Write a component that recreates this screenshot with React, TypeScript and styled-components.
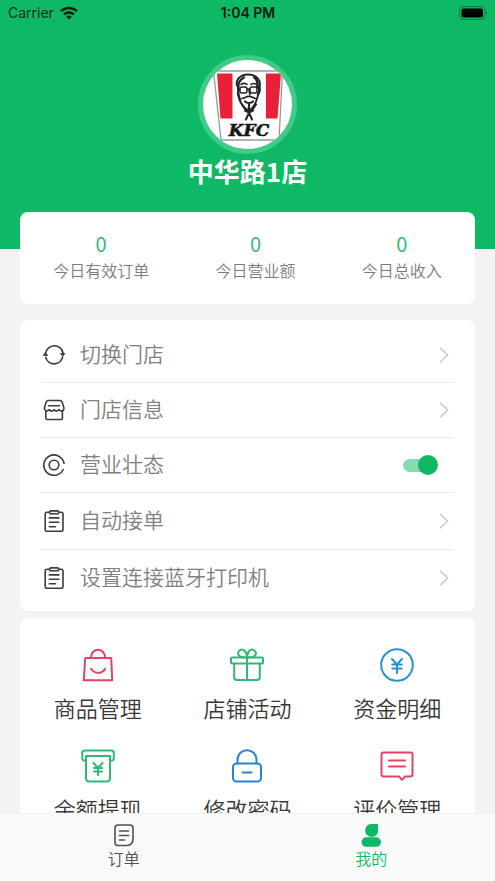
import React, { useState } from "react";
import styled, { createGlobalStyle } from "styled-components";

const green = "#0eb865";
const red = "#e04561";
const blue = "#2a8fd4";

const GlobalStyle = createGlobalStyle`
  * { box-sizing: border-box; }
  body {
    margin: 0;
    background: #f3f3f3;
    font-family: Roboto, "Noto Sans CJK SC", sans-serif;
  }
  button { font: inherit; color: inherit; background: none; border: 0; padding: 0; cursor: pointer; }
`;

const Screen = styled.div`
  display: flex;
  flex-direction: column;
  height: 100vh;
`;

const Content = styled.main`
  flex: 1;
  min-height: 0;
  overflow-y: auto;
  scrollbar-width: none;
`;

const Header = styled.header`
  display: flex;
  flex-direction: column;
  align-items: center;
  padding-bottom: 62px;
  background: ${green};
`;

const StatusBar = styled.div`
  display: grid;
  grid-template-columns: 1fr auto 1fr;
  align-items: center;
  align-self: stretch;
  height: 26px;
  padding: 0 7px 0 8px;
  color: #06301c;
  font: 14px/20px Inter, sans-serif;
`;

const Carrier = styled.span`
  display: flex;
  align-items: center;
  gap: 6px;
`;

const Clock = styled.span`
  color: #04200f;
  font-weight: 600;
`;

const BatteryIcon = styled.svg`
  justify-self: end;
`;

const Avatar = styled.div`
  margin-top: 29px;
  width: 99px;
  height: 99px;
  border: 5px solid #42cb87;
  border-radius: 50%;
  background: #fff;
  overflow: hidden;

  svg { display: block; width: 100%; height: 100%; }
`;

const StoreName = styled.h1`
  margin: 0;
  color: #fff;
  font-family: "Noto Sans CJK SC", sans-serif;
  font-size: 26px;
  font-weight: 700;
  line-height: 33px;
`;

const Card = styled.section`
  margin: 0 20px;
  border-radius: 8px;
  background: #fff;
`;

const StatsCard = styled(Card)`
  display: flex;
  justify-content: space-around;
  position: relative;
  margin-top: -37px;
  padding: 20px 0;
`;

const Stat = styled.div`
  display: flex;
  flex-direction: column;
  align-items: center;
  gap: 3px;
`;

const StatValue = styled.strong`
  color: #2dbd7d;
  font-family: "Noto Sans CJK SC", sans-serif;
  font-size: 20px;
  font-weight: 400;
  line-height: 24px;
`;

const StatLabel = styled.span`
  color: #7c7c7c;
  font-size: 16px;
  font-weight: 350;
  line-height: 25px;
`;

const MenuCard = styled(Card)`
  margin-top: 16px;
  padding: 7px 21px 5px;
`;

const MenuItem = styled.div<{ $tall?: boolean }>`
  display: flex;
  align-items: center;
  width: 100%;
  height: ${(p) => (p.$tall ? 57 : 55)}px;
  padding: 0 4px 0 2px;
  text-align: left;
  color: #808080;

  & + & { border-top: 1px solid #ebebeb; }
  > svg { flex: none; }
`;

const MenuLabel = styled.span`
  flex: 1;
  margin-left: 15px;
  font-size: 21px;
  font-weight: 350;
  line-height: 30px;
`;

const Switch = styled.input`
  appearance: none;
  display: grid;
  align-items: center;
  width: 35px;
  height: 20px;
  margin: 0 12px 0 0;
  cursor: pointer;

  &::before, &::after {
    content: "";
    grid-area: 1 / 1;
  }
  &::before {
    width: 30px;
    height: 13px;
    border-radius: 7px;
    background: #c9c9c9;
  }
  &::after {
    width: 20px;
    height: 20px;
    border-radius: 50%;
    background: #999;
  }
  &:checked::before { background: #86dcb2; }
  &:checked::after { justify-self: end; background: ${green}; }
`;

const ToolsCard = styled(Card)`
  display: grid;
  grid-template-columns: repeat(3, 1fr);
  row-gap: 23px;
  margin-top: 7px;
  padding: 30px 3px 20px;
`;

const Tool = styled.button`
  display: flex;
  flex-direction: column;
  align-items: center;
  gap: 12px;
`;

const ToolLabel = styled.span`
  color: #383838;
  font-size: 22px;
  font-weight: 350;
  line-height: 32px;
`;

const TabBar = styled.nav`
  display: grid;
  grid-template-columns: 1fr 1fr;
  height: 68px;
  border-top: 1px solid #f0f0f0;
  background: #fafafa;
`;

const Tab = styled.button<{ $active?: boolean }>`
  display: flex;
  flex-direction: column;
  align-items: center;
  padding-top: 9px;
  color: ${(p) => (p.$active ? green : "#505050")};
  font-size: 16px;
  font-weight: 350;
  line-height: 25px;
`;

function Line({ size, color = "#3c3c3c", width = 1.6, children }: {
  size: number;
  color?: string;
  width?: number;
  children: React.ReactNode;
}) {
  return (
    <svg width={size} height={size} viewBox={`0 0 ${size} ${size}`} fill="none" stroke={color}
      strokeWidth={width} strokeLinecap="round" strokeLinejoin="round" aria-hidden="true">
      {children}
    </svg>
  );
}

const SwitchStoreIcon = () => (
  <Line size={22}>
    <path d="M2.600 9.500A8.800 8.800 0 0 1 20 9M19.600 13A8.600 8.600 0 0 1 2.800 13.200" />
    <path d="M17.800 9.500h4l-1.800 2.400zM.600 11.400h4L2.600 9z" fill="#3c3c3c" strokeWidth="1" />
  </Line>
);

const StoreIcon = () => (
  <Line size={22}>
    <path d="M4.6 1.500h13.200l1.400 1.600 1.800 6.200c0 3-3.500 3.400-5 1.300-1.600 2-3.500 2-4.800 0-1.400 2-3.500 2-4.800 0-1.700 2.100-5.200 1.400-5.100-1.300L3.200 3z" />
    <path d="M2.8 12.200v7c0 .9.4 1.300 1.300 1.300h14c.9 0 1.300-.4 1.300-1.300v-7M5.700 6.800h10.800" />
  </Line>
);

const TargetIcon = () => (
  <Line size={22}>
    <path d="M21 9.3A10.2 10.2 0 1 0 20.2 15.5" />
    <circle cx="11" cy="11" r="4.8" />
  </Line>
);

const ClipboardIcon = () => (
  <Line size={22}>
    <path d="M6.3 2.3H4q-1.800 0-1.800 1.800v15.400q0 1.800 1.800 1.800h14.200q1.800 0 1.800-1.800V4.100q0-1.800-1.800-1.800h-2.400" />
    <rect x="6.5" y=".9" width="9.200" height="2.900" rx="1.400" />
    <path d="M6.300 7.900h9.600M6.300 12.200h9.600M6.300 16.800h6.200" />
  </Line>
);

const Chevron = () => (
  <svg width="12" height="18" viewBox="0 0 12 18" fill="none" stroke="#c9c9c9" strokeWidth="1.5" aria-hidden="true">
    <path d="m2 1.700 7.500 7.300L2 16.300" />
  </svg>
);

const BagIcon = () => (
  <Line size={34} color={red} width={2}>
    <path d="M4.200 10h26l1 22.300H2.800zM10 9.500C10.300-.700 23.800-.700 24.100 9.500M10 20.800c3.700 5.400 10.400 5.400 14.200 0" />
  </Line>
);

const GiftIcon = () => (
  <Line size={34} color="#2fb876" width={2}>
    <rect x="1" y="9.500" width="32" height="6" rx="1" />
    <path d="M4.200 15.500v13.800q0 2.700 2.700 2.700h20.200q2.700 0 2.700-2.700V15.500M17 9.500V32M17 9.500C8 10 7 5.500 9 3c4-4 8 1 8 6.500C17 4 21-1 25 3c2 2.500 1 7-8 6.500" />
  </Line>
);

const YenCircleIcon = () => (
  <Line size={34} color={blue} width={2}>
    <circle cx="17" cy="17" r="15.800" />
    <path d="m12 11 5 5.500 5-5.500M17 16.500V25M12.300 16.500h9.400M12.300 20.500h9.400" />
  </Line>
);

const WithdrawIcon = () => (
  <Line size={34} color="#2fb876" width={2}>
    <path d="M5 11.500H3.500Q1.200 11.500 1.200 9V4Q1.200 1.500 3.700 1.500h26.600q2.500 0 2.500 2.500v5q0 2.500-2.300 2.500H29" />
    <path d="M5 7h24v22q0 3.500-3.500 3.500h-17Q5 32.500 5 29z" />
    <path d="m12.500 14 4.500 5 4.500-5M17 19v7M13 19h8M13 22.500h8" />
  </Line>
);

const LockIcon = () => (
  <Line size={34} color="#2a82ce" width={2}>
    <path d="M7.500 14.500V11C7.500-2 26.500-2 26.500 11v3.500M12.500 23.500h9" />
    <rect x="3" y="14.500" width="28" height="18" rx="3.500" />
  </Line>
);

const CommentIcon = () => (
  <Line size={34} color={red} width={2}>
    <path d="M3.500 3.500h27q2 0 2 2v20q0 2-2 2H25l-3 3.300-3-3.300H3.500q-2 0-2-2v-20q0-2 2-2zM9 11.500h16M9 17.500h16" />
  </Line>
);

const OrderIcon = () => (
  <Line size={24} color="#505050" width={1.6}>
    <path d="M6 2h12q3 0 3 3v11q0 6-6 6.500H6q-3 0-3-3V5q0-3 3-3zM7.500 8h9M7.500 12.500h9M7.500 17h5" />
  </Line>
);

const PersonIcon = () => (
  <svg width="24" height="24" viewBox="0 0 24 24" fill={green} aria-hidden="true">
    <path d="M12.500 1H19v6.500c0 4-2.600 6.300-6.300 6.300S6.200 11.500 6.200 7.500 8.800 1 12.500 1z" />
    <rect x="2.500" y="14.300" width="19.500" height="9.500" rx="4.700" />
  </svg>
);

const StoreLogo = () => (
  <svg viewBox="0 0 89 89" role="img" aria-label="KFC">
    <path d="M10.500 11h69l-3.500 69H18z" fill="#fff" stroke="#999" strokeWidth="1.300" />
    <path d="M14 13.500H29.500V58.500H17.500zM63 13.500h15L74.500 58.500H63z" fill="#e8203a" />
    <g fill="none" stroke="#252525" strokeLinecap="round" strokeLinejoin="round" transform="translate(-1 -4.500)">
      <path d="M36 32c-4-7 2-13 10-13 9 0 14 6 11 14-1 10-3 18-10 22-7-3-11-11-11-23z" fill="#fff" strokeWidth="2" />
      <path d="M37 35c-2-7 1-11 5-13M57 31c1 2 1 5-1 8M36 38l2 7M52 22c4 2 4 6 3 10" strokeWidth="2.400" />
      <path d="M39 29c2-2 5-1 6 0M49 29c2-2 4-1 6 0" strokeWidth="1.600" />
      <rect x="38" y="31.500" width="7" height="6" rx="2" strokeWidth="1.400" />
      <rect x="48" y="31.500" width="7" height="6" rx="2" strokeWidth="1.400" />
      <path d="M45 33.500h3M47 35l1 4M40 43c3 0 5-3 7-2 2-1 4 2 7 2" strokeWidth="1.700" />
      <path d="M43 46c2 2 6 2 8 0M47 48v6" strokeWidth="2.200" />
      <path d="M40 49l4 6h6l4-6M43 55l4 2 4-2M47 57l-3 7M47 57l3 7" strokeWidth="2" />
    </g>
    <text x="46" y="76" textAnchor="middle" fontFamily="'DejaVu Serif', serif" fontWeight="700"
      fontStyle="italic" fontSize="17" fill="#171717" stroke="#171717" strokeWidth=".6">KFC</text>
  </svg>
);

const stats = [
  { label: "今日有效订单", value: 0 },
  { label: "今日营业额", value: 0 },
  { label: "今日总收入", value: 0 },
];

const tools = [
  { label: "商品管理", Icon: BagIcon },
  { label: "店铺活动", Icon: GiftIcon },
  { label: "资金明细", Icon: YenCircleIcon },
  { label: "余额提现", Icon: WithdrawIcon },
  { label: "修改密码", Icon: LockIcon },
  { label: "评价管理", Icon: CommentIcon },
];

export default function App() {
  const [open, setOpen] = useState(true);

  return (
    <Screen>
      <GlobalStyle />
      <Content>
        <Header>
          <StatusBar>
            <Carrier>
              Carrier
              <svg width="18" height="14" viewBox="0 0 18 14" fill="none" stroke="#04200f" strokeWidth="2.400" aria-hidden="true">
                <path d="M1 5.200a11.500 11.500 0 0 1 16 0M4 8.500a7.200 7.200 0 0 1 10 0" />
                <path d="M6.300 10.800a4 4 0 0 1 5.400 0L9 13.500z" fill="#04200f" stroke="none" />
              </svg>
            </Carrier>
            <Clock>1:04 PM</Clock>
            <BatteryIcon width="29" height="14" viewBox="0 0 29 14" aria-hidden="true">
              <rect x=".5" y=".5" width="25.500" height="13" rx="4" fill="none" stroke="#087a43" />
              <rect x="2.500" y="2.500" width="21.500" height="9" rx="2" fill="#000" />
              <path d="M27.200 5q2 2 0 4z" fill="#087a43" />
            </BatteryIcon>
          </StatusBar>
          <Avatar><StoreLogo /></Avatar>
          <StoreName>中华路1店</StoreName>
        </Header>

        <StatsCard>
          {stats.map((s) => (
            <Stat key={s.label}>
              <StatValue>{s.value}</StatValue>
              <StatLabel>{s.label}</StatLabel>
            </Stat>
          ))}
        </StatsCard>

        <MenuCard>
          <MenuItem as="button">
            <SwitchStoreIcon />
            <MenuLabel>切换门店</MenuLabel>
            <Chevron />
          </MenuItem>
          <MenuItem as="button">
            <StoreIcon />
            <MenuLabel>门店信息</MenuLabel>
            <Chevron />
          </MenuItem>
          <MenuItem as="label">
            <TargetIcon />
            <MenuLabel>营业壮态</MenuLabel>
            <Switch type="checkbox" role="switch" checked={open} onChange={(e) => setOpen(e.target.checked)} />
          </MenuItem>
          <MenuItem as="button" $tall>
            <ClipboardIcon />
            <MenuLabel>自动接单</MenuLabel>
            <Chevron />
          </MenuItem>
          <MenuItem as="button" $tall>
            <ClipboardIcon />
            <MenuLabel>设置连接蓝牙打印机</MenuLabel>
            <Chevron />
          </MenuItem>
        </MenuCard>

        <ToolsCard>
          {tools.map(({ label, Icon }) => (
            <Tool key={label}>
              <Icon />
              <ToolLabel>{label}</ToolLabel>
            </Tool>
          ))}
        </ToolsCard>
      </Content>

      <TabBar>
        <Tab><OrderIcon />订单</Tab>
        <Tab $active aria-current="page"><PersonIcon />我的</Tab>
      </TabBar>
    </Screen>
  );
}
